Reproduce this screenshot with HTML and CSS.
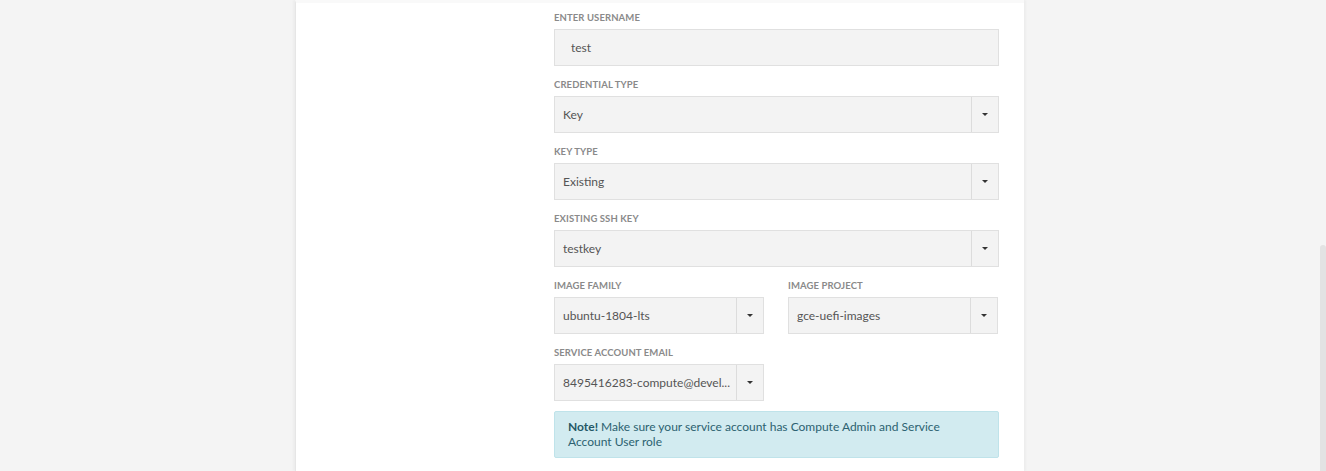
FILE: index.html
```html
<!DOCTYPE html>
<html>
<head>
<meta charset="utf-8">
<link rel="stylesheet" href="styles.css">
</head>
<body>
<div class="page">
  <div class="card">
    <form class="form">
      <div class="field">
        <label class="label">Enter Username</label>
        <div class="input">test</div>
      </div>
      <div class="field">
        <label class="label">Credential Type</label>
        <div class="select"><span class="value">Key</span><span class="caret-btn"><i class="caret"></i></span></div>
      </div>
      <div class="field">
        <label class="label">Key Type</label>
        <div class="select"><span class="value">Existing</span><span class="caret-btn"><i class="caret"></i></span></div>
      </div>
      <div class="field">
        <label class="label">Existing SSH Key</label>
        <div class="select"><span class="value">testkey</span><span class="caret-btn"><i class="caret"></i></span></div>
      </div>
      <div class="row">
        <div class="field">
          <label class="label">Image Family</label>
          <div class="select"><span class="value">ubuntu-1804-lts</span><span class="caret-btn"><i class="caret"></i></span></div>
        </div>
        <div class="field">
          <label class="label">Image Project</label>
          <div class="select"><span class="value">gce-uefi-images</span><span class="caret-btn"><i class="caret"></i></span></div>
        </div>
      </div>
      <div class="row">
        <div class="field">
          <label class="label">Service Account Email</label>
          <div class="select"><span class="value">8495416283-compute@devel...</span><span class="caret-btn"><i class="caret"></i></span></div>
        </div>
      </div>
      <div class="note"><p><b>Note!</b> Make sure your service account has Compute Admin and Service Account User role</p></div>
    </form>
  </div>
</div>
<div class="scroll-thumb"></div>
</body>
</html>
```
FILE: styles.css
```css
html, body {
  margin: 0;
  padding: 0;
  height: 100%;
  overflow: hidden;
}
body {
  background: #f4f4f4;
  font-family: Lato, "Liberation Sans", sans-serif;
  color: #555;
}
.page {
  display: flex;
  padding-left: 295px;
  height: 100%;
}
.card {
  width: 729px;
  background: #fff;
  border-left: 1px solid #e6e6e6;
  border-top: 3px solid #f9f9f9;
  box-shadow: -2px 0 2px rgba(0,0,0,0.03), 2px 0 2px rgba(0,0,0,0.03);
  padding: 9px 0 0 258px;
  box-sizing: border-box;
}
.form {
  width: 445px;
}
.field {
  margin-bottom: 13px;
}
.label {
  display: block;
  font-size: 9.5px;
  font-weight: 700;
  text-transform: uppercase;
  color: #8a8a8a;
  line-height: 12px;
  margin-bottom: 5px;
  letter-spacing: 0.1px;
}
.input, .select {
  height: 37px;
  box-sizing: border-box;
  background: #f3f3f3;
  border: 1px solid #e0e0e0;
  font-size: 12px;
  color: #555;
}
.input {
  line-height: 35px;
  padding-left: 16px;
}
.select {
  display: flex;
  align-items: stretch;
}
.value {
  flex: 1;
  line-height: 35px;
  padding-left: 8px;
  white-space: nowrap;
  overflow: hidden;
}
.caret-btn {
  width: 26px;
  border-left: 1px solid #dcdcdc;
  display: flex;
  align-items: center;
  justify-content: center;
}
.caret {
  width: 0;
  height: 0;
  border-left: 3px solid transparent;
  border-right: 3px solid transparent;
  border-top: 3px solid #333;
}
.row {
  display: flex;
  gap: 24px;
}
.row .field {
  width: 210px;
}
.note {
  margin-top: -3px;
  background: #d2ebf0;
  border: 1px solid #bfe3ea;
  border-radius: 2px;
  padding: 7px 40px 8px 13px;
  color: #2c6271;
  font-size: 12px;
  line-height: 15px;
}
.note p {
  margin: 0;
}
.note b {
  color: #245866;
}
.scroll-thumb {
  position: absolute;
  right: 0;
  top: 245px;
  width: 6px;
  bottom: 0;
  background: #e3e3e3;
  border-radius: 3px 3px 0 0;
}
```
